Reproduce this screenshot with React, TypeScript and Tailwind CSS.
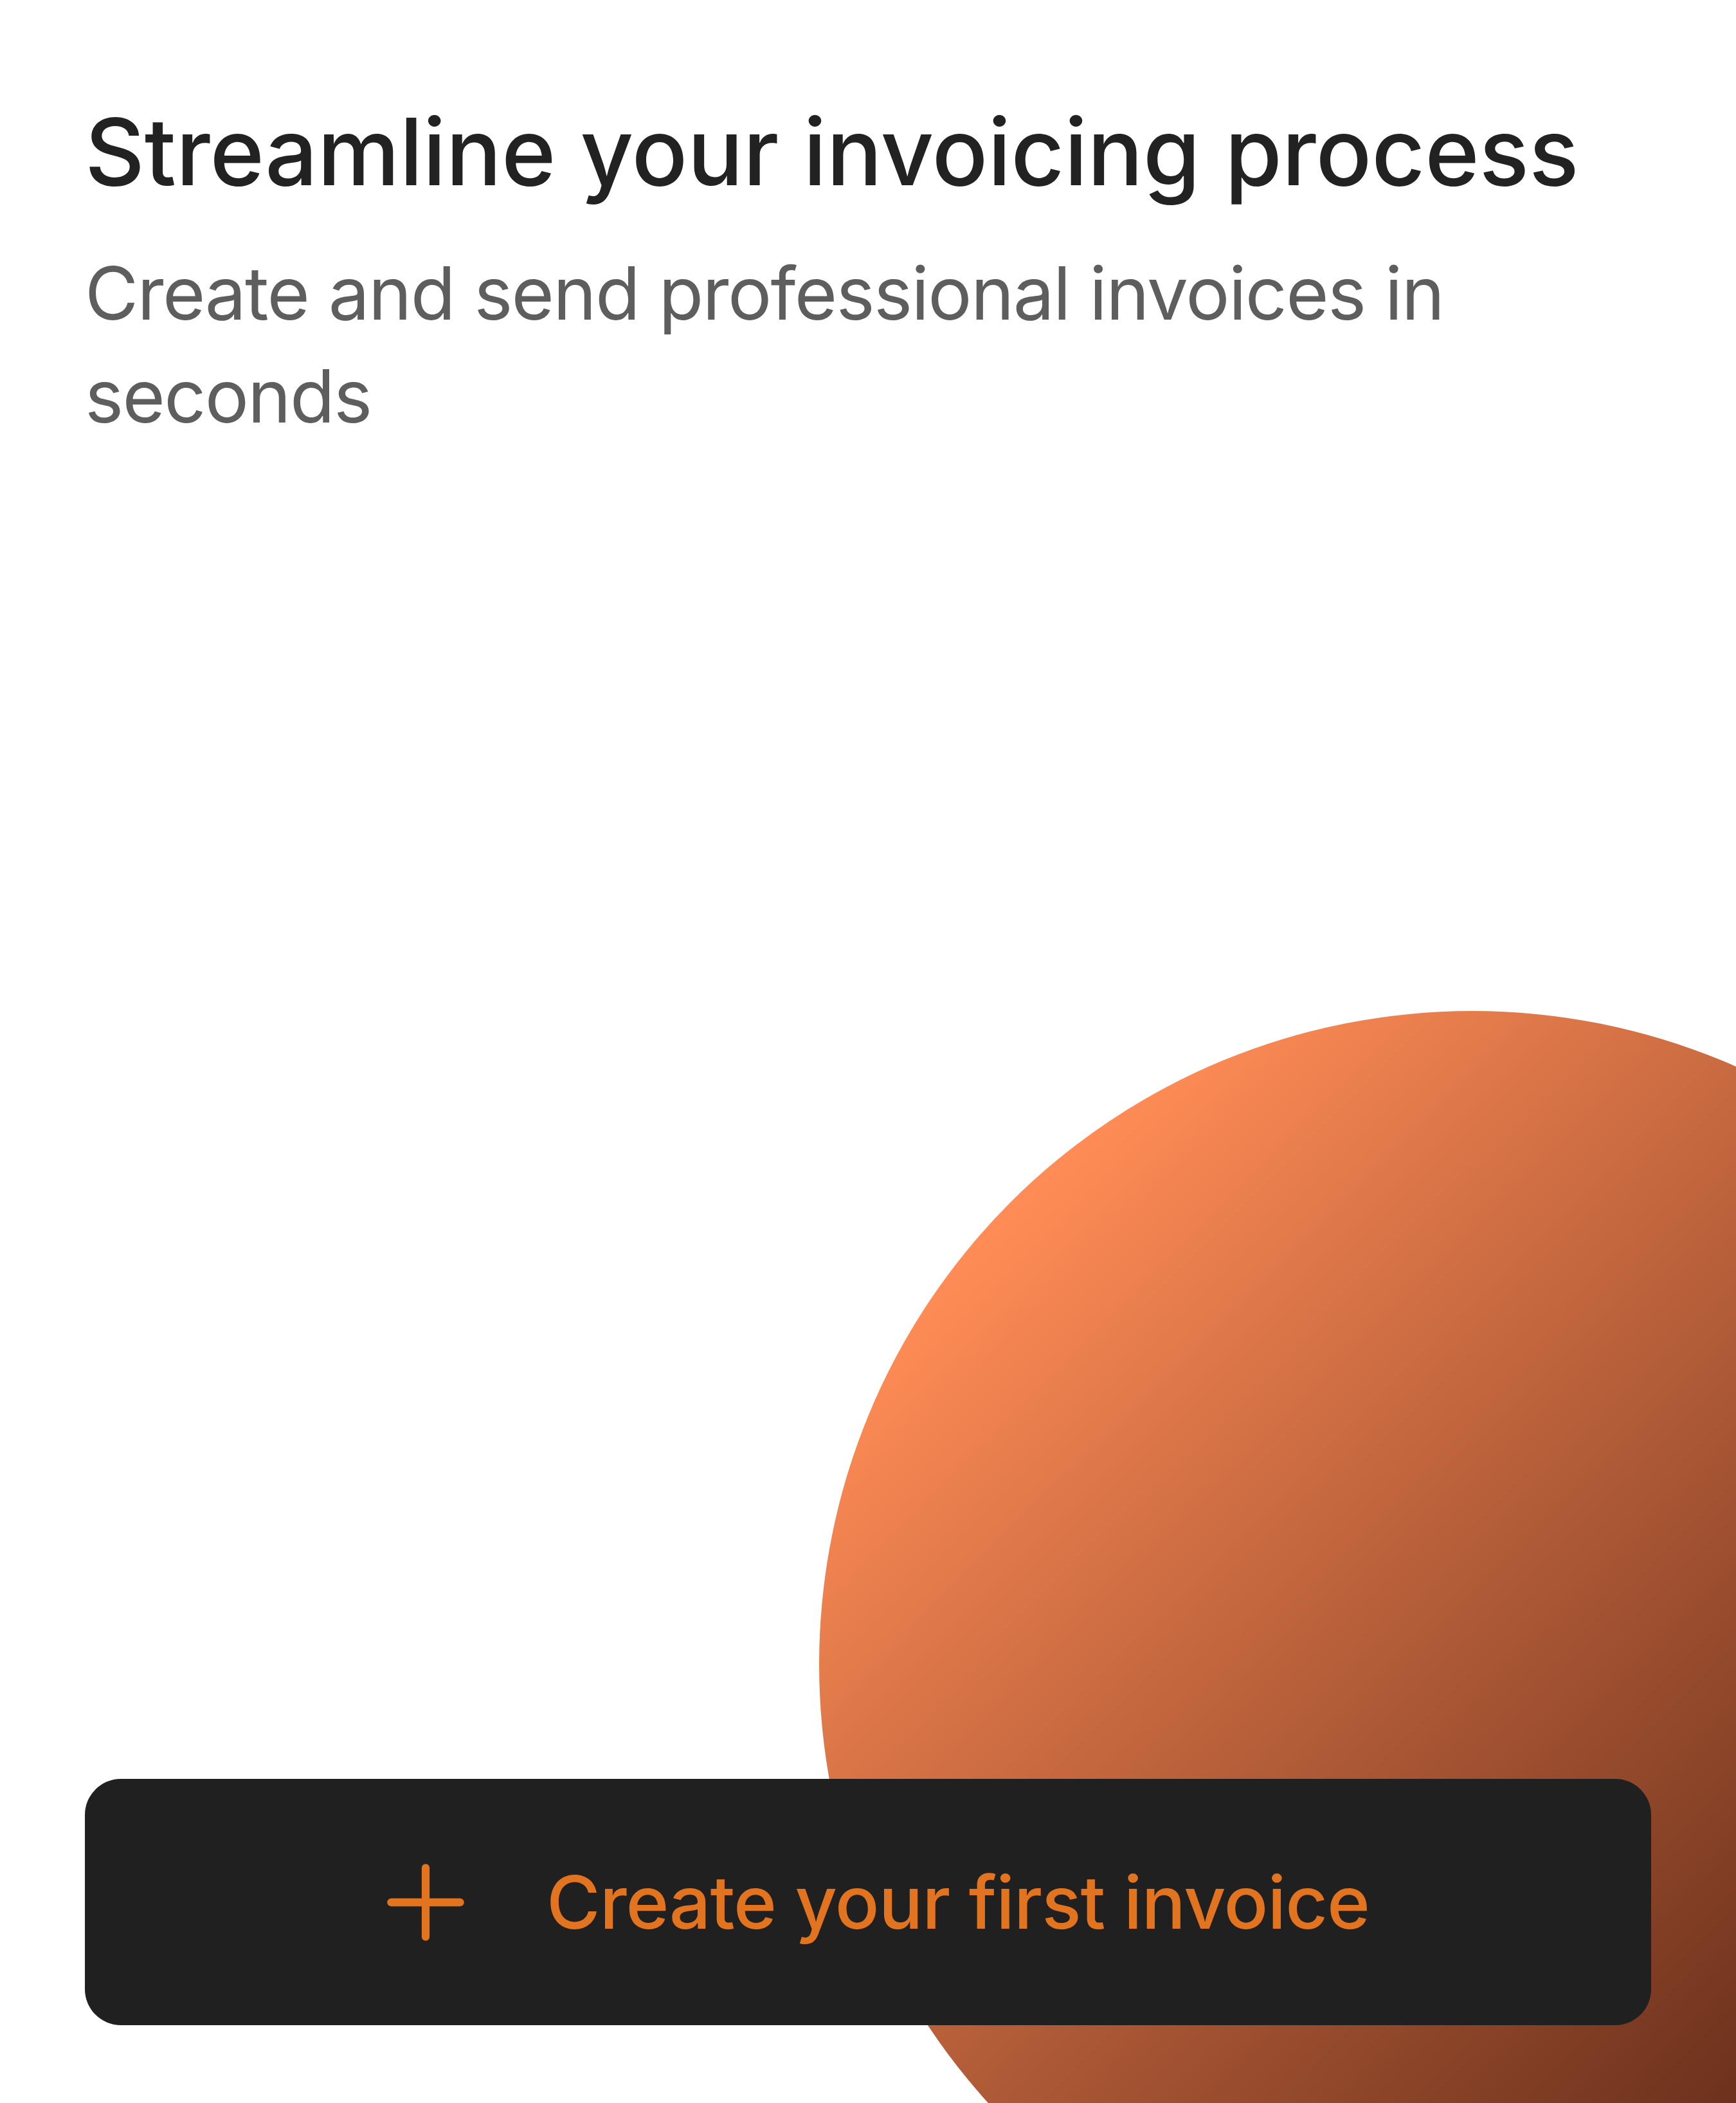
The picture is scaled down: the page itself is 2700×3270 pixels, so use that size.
import { Plus } from "lucide-react";

export default function App() {
  return (
    <div className="relative w-[2700px] h-[3270px] overflow-hidden bg-white font-['Inter','Liberation_Sans',sans-serif]">
      {/* decorative orb */}
      <div className="absolute left-[1274px] top-[1572px] w-[2032px] h-[2032px] rounded-full bg-linear-to-br from-[#ff8c56] from-15% to-[#3d140a]" />

      <div className="relative z-10 flex flex-col justify-between h-full px-[132px] pt-[146px] pb-[121px]">
        <div className="flex flex-col gap-[50px]">
          <h1 className="text-[144px] leading-[180px] font-medium tracking-[-0.2px] text-[#222222]">
            Streamline your invoicing process
          </h1>
          <p className="text-[114px] leading-[160px] text-[#5e5e5e] tracking-[-1.7px]">
            Create and send professional invoices in seconds
          </p>
        </div>

        <button className="flex items-center justify-center gap-[96px] h-[383px] w-full rounded-[56px] bg-[#202020] text-[#e2731f]">
          <Plus size={184} strokeWidth={1.6} />
          <span className="text-[114px] leading-none font-medium tracking-[-1px]">Create your first invoice</span>
        </button>
      </div>
    </div>
  );
}
